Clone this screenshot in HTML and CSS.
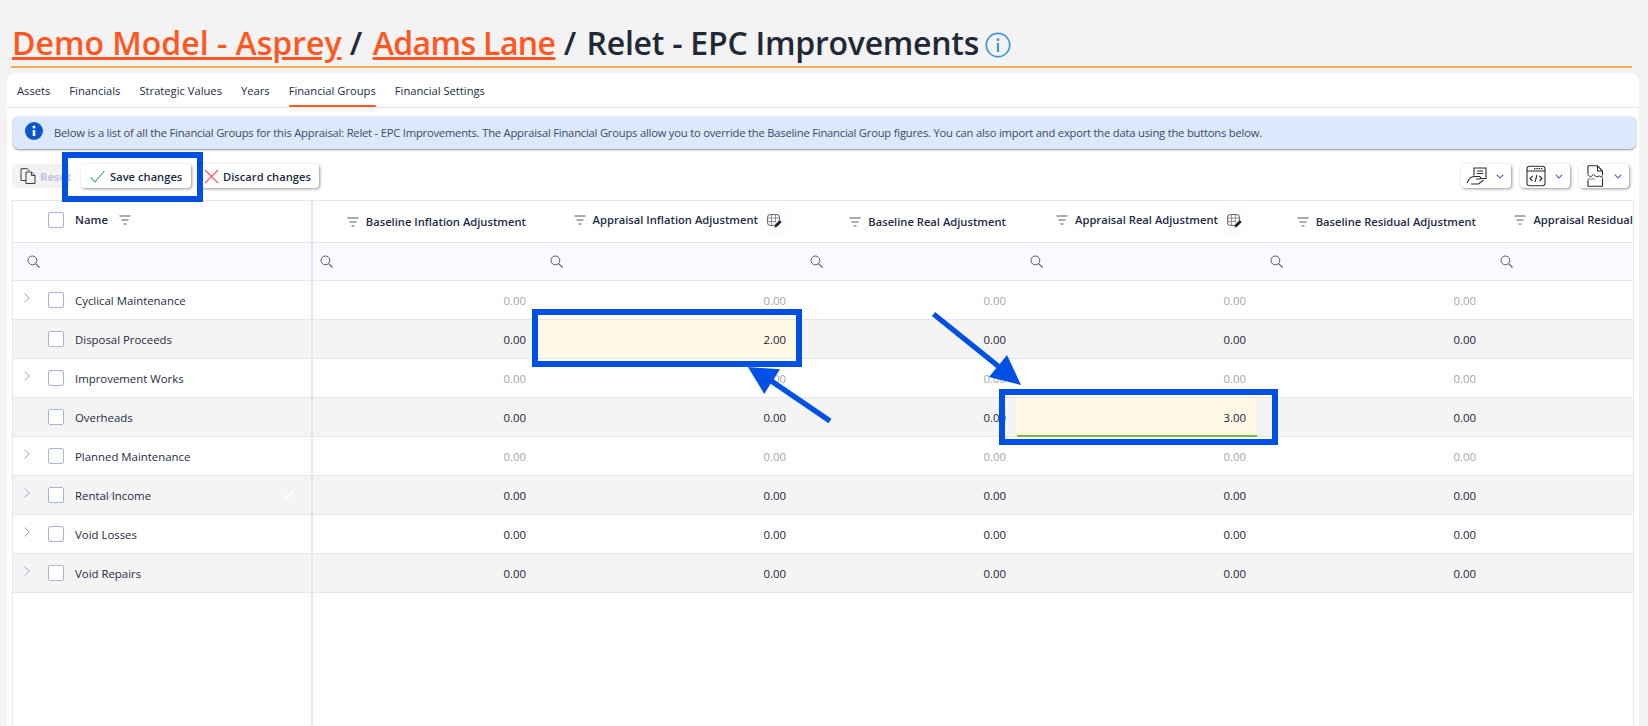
FILE: index.html
```html
<!DOCTYPE html>
<html lang="en">
<head>
<meta charset="utf-8">
<title>Relet - EPC Improvements</title>
<link rel="stylesheet" href="styles.css">
</head>
<body>
<svg class="defs" width="0" height="0" aria-hidden="true">
  <symbol id="i-filter" viewBox="0 0 12 10"><path d="M.5 1h11M2.500 5h7M4.500 9h3" fill="none" stroke="currentColor" stroke-width="1"/></symbol>
  <symbol id="i-search" viewBox="0 0 13 13"><circle cx="5.400" cy="5.400" r="4.400" fill="none" stroke="currentColor" stroke-width="1"/><path d="M8.600 8.600l3.900 3.900" fill="none" stroke="currentColor" stroke-width="1.100"/></symbol>
  <symbol id="i-chev" viewBox="0 0 6 10"><path d="M.6.6L5.200 5 .6 9.400" fill="none" stroke="currentColor" stroke-width="1"/></symbol>
  <symbol id="i-down" viewBox="0 0 8 5"><path d="M.7.7L4 4l3.300-3.300" fill="none" stroke="currentColor" stroke-width="1.100"/></symbol>
  <symbol id="i-edit" viewBox="0 0 15 14"><g fill="none" stroke-width="1"><rect x=".6" y=".6" width="11.800" height="10.800" rx="2.500" stroke="#55586a"/><path d="M.6 4h11.800M.6 7.500h8" stroke="#8b8896"/><path d="M4.500 .6v10.800M8.500 .6v8" stroke="#a08f86"/></g><path d="M7 13.800l.7-3 5-5 2.300 2.300-5 5z" fill="#1d2230" stroke="#fff" stroke-width=".5"/></symbol>
</svg>

<h1 class="title">
  <a class="crumb-model" href="#">Demo Model - Asprey</a> / <a class="crumb-scheme" href="#">Adams Lane</a> / <span class="crumb-current">Relet - EPC Improvements</span>
  <svg class="title-info" viewBox="0 0 26 26"><circle cx="13" cy="13" r="11.700" fill="none" stroke="#3a98d8" stroke-width="1.700"/><circle cx="13" cy="7.700" r="1.400" fill="#3a98d8"/><path d="M13 11v9" stroke="#3a98d8" stroke-width="2.200"/></svg>
</h1>

<main class="card">
  <nav class="tabs">
    <a class="tab" href="#">Assets</a>
    <a class="tab" href="#">Financials</a>
    <a class="tab" href="#">Strategic Values</a>
    <a class="tab" href="#">Years</a>
    <a class="tab is-active" href="#">Financial Groups</a>
    <a class="tab" href="#">Financial Settings</a>
  </nav>

  <div class="banner">
    <svg class="banner-icon" viewBox="0 0 18 18"><circle cx="9" cy="9" r="9" fill="#0b57c9"/><circle cx="9" cy="5" r="1.500" fill="#fff"/><path d="M9 8v6" stroke="#fff" stroke-width="2.600"/></svg>
    <p>Below is a list of all the Financial Groups for this Appraisal: Relet - EPC Improvements. The Appraisal Financial Groups allow you to override the Baseline Financial Group figures. You can also import and export the data using the buttons below.</p>
  </div>

  <div class="toolbar">
    <button class="btn btn-reset">
      <svg class="btn-icon" viewBox="0 0 16 16"><path d="M6 12.500H1V.7h6.500L9.500 3M6 4h5.500l3.500 3.500v8H6z M11.500 4v3.500H15" fill="none" stroke="#3c3c44" stroke-width="1"/></svg>
      <span>Reset</span>
    </button>
    <button class="btn btn-save">
      <svg class="btn-icon" viewBox="0 0 15 15"><path d="M.7 8.300l4.300 4.700L14.300 2" fill="none" stroke="#2fae63" stroke-width="1.100"/></svg>
      <span>Save changes</span>
    </button>
    <button class="btn btn-discard">
      <svg class="btn-icon" viewBox="0 0 15 15"><path d="M1 1l13 13M14 1L1 14" fill="none" stroke="#ec5f67" stroke-width="1.200"/></svg>
      <span>Discard changes</span>
    </button>
    <div class="toolbar-right">
      <button class="btn btn-menu">
        <svg class="menu-icon" viewBox="0 0 22 22"><path d="M8 10.500V3h12v10.500h-6M11 6h6M11 8.500h6" fill="none" stroke="#2b2b33" stroke-width="1.100"/><path d="M1 18c2-4.500 4-6.500 7-6.500h5.500c1.500.3 1.500 2.500 0 2.500H10M5 19h7.500l5-4" fill="none" stroke="#2b2b33" stroke-width="1.100"/></svg>
        <svg class="down" aria-hidden="true"><use href="#i-down"/></svg>
      </button>
      <button class="btn btn-menu">
        <svg class="menu-icon" viewBox="0 0 22 22"><rect x="2" y="1.200" width="18" height="19.600" rx="2.500" fill="none" stroke="#2b2b33" stroke-width="1.100"/><path d="M2 6h18" stroke="#2b2b33" stroke-width="1"/><path d="M9 3.700h8.500" stroke="#2b2b33" stroke-width="1.300" stroke-dasharray="1.500 .8"/><path d="M7.500 11l-2.500 2.500 2.500 2.500M14.500 11l2.500 2.500-2.500 2.500M12 10l-2 7" fill="none" stroke="#2b2b33" stroke-width="1.100"/></svg>
        <svg class="down" aria-hidden="true"><use href="#i-down"/></svg>
      </button>
      <button class="btn btn-menu">
        <svg class="menu-icon" viewBox="0 0 22 22"><path d="M4 9V.8h9.500L18.500 6v4.500M4 14.500v6.700h14.500V13.500M13.500 .8V6h5" fill="none" stroke="#2b2b33" stroke-width="1.100"/><path d="M3.500 9.500l3 2.500 3-2.500 3 2.500 3-1 3.500 1.500" fill="none" stroke="#2b2b33" stroke-width="1"/><path d="M4 13l3 1.500 2-1 2 1.500" fill="none" stroke="#6a6a72" stroke-width=".8"/></svg>
        <svg class="down" aria-hidden="true"><use href="#i-down"/></svg>
      </button>
    </div>
  </div>

  <div class="grid">
    <div class="row row-head">
      <div class="cell cell-name head-name"><span class="check"></span><b>Name</b><svg class="ic-filter name-filter"><use href="#i-filter"/></svg></div>
      <div class="cell head"><svg class="ic-filter"><use href="#i-filter"/></svg><b>Baseline Inflation Adjustment</b></div>
      <div class="cell head head-edit"><svg class="ic-filter"><use href="#i-filter"/></svg><b>Appraisal Inflation Adjustment</b><span class="edit-box"><svg class="ic-edit"><use href="#i-edit"/></svg></span></div>
      <div class="cell head"><svg class="ic-filter"><use href="#i-filter"/></svg><b>Baseline Real Adjustment</b></div>
      <div class="cell head head-edit"><svg class="ic-filter"><use href="#i-filter"/></svg><b>Appraisal Real Adjustment</b><span class="edit-box"><svg class="ic-edit"><use href="#i-edit"/></svg></span></div>
      <div class="cell head"><svg class="ic-filter"><use href="#i-filter"/></svg><b>Baseline Residual Adjustment</b></div>
      <div class="cell head head-edit head-last"><svg class="ic-filter"><use href="#i-filter"/></svg><b>Appraisal Residual Adjustment</b></div>
    </div>

    <div class="row row-search">
      <div class="cell cell-name search s0"><svg class="ic-search"><use href="#i-search"/></svg></div>
      <div class="cell search s1"><svg class="ic-search"><use href="#i-search"/></svg></div>
      <div class="cell search s2"><svg class="ic-search"><use href="#i-search"/></svg></div>
      <div class="cell search s3"><svg class="ic-search"><use href="#i-search"/></svg></div>
      <div class="cell search s3"><svg class="ic-search"><use href="#i-search"/></svg></div>
      <div class="cell search s3"><svg class="ic-search"><use href="#i-search"/></svg></div>
      <div class="cell search s3"><svg class="ic-search"><use href="#i-search"/></svg></div>
    </div>

    <div class="row is-muted">
      <div class="cell cell-name"><svg class="chev"><use href="#i-chev"/></svg><span class="check"></span><span>Cyclical Maintenance</span></div>
      <div class="cell num">0.00</div><div class="cell num">0.00</div><div class="cell num">0.00</div><div class="cell num">0.00</div><div class="cell num">0.00</div><div class="cell num"></div>
    </div>
    <div class="row is-alt">
      <div class="cell cell-name no-chev"><span class="check"></span><span>Disposal Proceeds</span></div>
      <div class="cell num">0.00</div><div class="cell num is-edited">2.00</div><div class="cell num">0.00</div><div class="cell num">0.00</div><div class="cell num">0.00</div><div class="cell num"></div>
    </div>
    <div class="row is-muted">
      <div class="cell cell-name"><svg class="chev"><use href="#i-chev"/></svg><span class="check"></span><span>Improvement Works</span></div>
      <div class="cell num">0.00</div><div class="cell num">0.00</div><div class="cell num">0.00</div><div class="cell num">0.00</div><div class="cell num">0.00</div><div class="cell num"></div>
    </div>
    <div class="row is-alt">
      <div class="cell cell-name no-chev"><span class="check"></span><span>Overheads</span></div>
      <div class="cell num">0.00</div><div class="cell num">0.00</div><div class="cell num">0.00</div><div class="cell num is-edited is-focus">3.00</div><div class="cell num">0.00</div><div class="cell num"></div>
    </div>
    <div class="row is-muted">
      <div class="cell cell-name"><svg class="chev"><use href="#i-chev"/></svg><span class="check"></span><span>Planned Maintenance</span></div>
      <div class="cell num">0.00</div><div class="cell num">0.00</div><div class="cell num">0.00</div><div class="cell num">0.00</div><div class="cell num">0.00</div><div class="cell num"></div>
    </div>
    <div class="row is-alt">
      <div class="cell cell-name"><svg class="chev"><use href="#i-chev"/></svg><span class="check"></span><span>Rental Income</span>
        <svg class="row-tick" viewBox="0 0 11 9"><path d="M.7 5l3 3L10.300 .8" fill="none" stroke="#fff" stroke-width="1.300"/></svg>
        <svg class="cursor-mark" viewBox="0 0 6 8"><path d="M.5 7.500L5.500 .5" stroke="#b9b9c2" stroke-width="1"/></svg>
      </div>
      <div class="cell num">0.00</div><div class="cell num">0.00</div><div class="cell num">0.00</div><div class="cell num">0.00</div><div class="cell num">0.00</div><div class="cell num"></div>
    </div>
    <div class="row">
      <div class="cell cell-name"><svg class="chev"><use href="#i-chev"/></svg><span class="check"></span><span>Void Losses</span></div>
      <div class="cell num">0.00</div><div class="cell num">0.00</div><div class="cell num">0.00</div><div class="cell num">0.00</div><div class="cell num">0.00</div><div class="cell num"></div>
    </div>
    <div class="row is-alt">
      <div class="cell cell-name"><svg class="chev"><use href="#i-chev"/></svg><span class="check"></span><span>Void Repairs</span></div>
      <div class="cell num">0.00</div><div class="cell num">0.00</div><div class="cell num">0.00</div><div class="cell num">0.00</div><div class="cell num">0.00</div><div class="cell num"></div>
    </div>
    <div class="row row-empty"><div class="cell cell-name"></div></div>
  </div>
</main>

<svg class="annotations" viewBox="0 0 1648 726" aria-hidden="true">
  <g fill="none" stroke="#0050e4" stroke-width="6">
    <rect x="65" y="155" width="135" height="44"/>
    <rect x="535" y="312" width="264" height="52"/>
    <rect x="1002" y="392" width="273" height="50"/>
  </g>
  <g fill="#0050e4">
    <path d="M748 367L780 369.300 773.500 379.300 831.500 418.800 828.500 423.200 770.500 383.700 764.300 394z"/>
    <path d="M1021 385L989 377 996.300 368.100 931.800 316.100 935.200 311.900 999.700 363.900 1007 355z"/>
  </g>
</svg>
</body>
</html>
```
FILE: styles.css
```css
* { box-sizing: border-box; }
html, body { margin: 0; height: 726px; overflow: hidden; }
body {
  position: relative;
  background: #f3f3f3;
  font-family: "Open Sans", "Noto Sans", sans-serif;
  font-size: 11.4px;
  color: #1f2a44;
  padding: 0 9px 0 7px;
}
.defs { position: absolute; }
.title {
  margin: 0 7px 0 4px;
  height: 68px;
  padding: 25px 0 0 1px;
  border-bottom: 2px solid #f6ad55;
  font-size: 32px;
  line-height: 36px;
  font-weight: 600;
  color: #1f2937;
  white-space: nowrap;
}
.title a {
  color: #ff5722;
  text-decoration-thickness: 3px;
}
.crumb-scheme { margin-left: 2px; letter-spacing: -.6px; }
.crumb-current { margin-left: 2px; letter-spacing: -.25px; }
.title-info { width: 26px; height: 26px; vertical-align: -3px; margin-left: -2px; }

.card {
  margin-top: 5px;
  height: 660px;
  background: #fff;
  border-radius: 8px 8px 0 0;
  padding: 0 5px;
  overflow: hidden;
}
.tabs {
  display: flex;
  gap: 19px;
  height: 35px;
  margin: 0 -5px;
  padding: 0 0 0 10px;
  border-bottom: 1px solid #e4e7f0;
  font-size: 11.2px;
}
.tab {
  height: 34px;
  padding-top: 9px;
  color: #1f2a44;
  text-decoration: none;
  line-height: 18px;
  position: relative;
}
.tab.is-active::after {
  content: "";
  position: absolute;
  left: 0; right: 0; bottom: 0;
  height: 2px;
  border-radius: 2px;
  background: #ff5722;
}
.banner {
  display: flex;
  align-items: center;
  gap: 11px;
  height: 33px;
  margin: 8px -2px 0 1px;
  padding: 0 0 0 12px;
  background: #dce8fb;
  border-radius: 6px;
  box-shadow: 0 1px 2px rgba(60, 60, 70, .55);
}
.banner-icon { width: 18px; height: 18px; flex: none; margin-bottom: 4px; }
.banner p {
  margin: 0;
  color: #3c4a66;
  white-space: nowrap;
  font-size: 11.2px;
  letter-spacing: -.2px;
}

.toolbar {
  display: flex;
  height: 24px;
  margin: 15px 0 12px;
}
.btn {
  display: flex;
  align-items: center;
  height: 24px;
  border: 0;
  padding: 0;
  background: #fff;
  border-radius: 4px;
  font: 600 11.2px "Open Sans", "Noto Sans", sans-serif;
  color: #1f2a44;
  box-shadow: 1px 1px 3px rgba(50, 50, 60, .5);
  white-space: nowrap;
}
.btn-icon { width: 15px; height: 15px; flex: none; }
.btn-reset {
  width: 58px;
  margin-right: 11px;
  padding-left: 8px;
  gap: 4px;
  background: #f3f3f4;
  color: #bcc6e4;
  box-shadow: none;
  font-weight: 700;
}
.btn-reset .btn-icon { width: 16px; height: 16px; }
.btn-save { width: 110px; margin-right: 8px; padding-left: 9px; gap: 5px; }
.btn-discard { width: 120px; padding-left: 5px; gap: 4px; }
.toolbar-right { display: flex; gap: 9px; margin-left: auto; margin-right: 5px; }
.btn-menu { width: 50px; padding-left: 5px; justify-content: flex-start; }
.menu-icon { width: 22px; height: 22px; }
.down { width: 8px; height: 5px; margin-left: 8px; color: #4a6fb5; }

.grid {
  height: 600px;
  width: 1622px;
  border: 1px solid #e4e7f0;
  border-bottom: 0;
  overflow: hidden;
}
.row {
  display: grid;
  grid-template-columns: 300px 224px 260px 220px 240px 230px 230px;
  height: 39px;
}
.row-head { height: 42px; }
.row-search { height: 38px; background: #f9faff; }
.row-empty { height: 200px; }
.is-alt { background: #f4f4f5; }
.cell {
  display: flex;
  align-items: center;
  min-width: 0;
  border-bottom: 1px solid #e4e7f0;
}
.row-empty .cell { border-bottom: 0; }
.cell-name {
  position: relative;
  padding-left: 11px;
  border-right: 2px solid #e4e7f0;
}
.cell-name .check { margin-right: 11px; }
.no-chev { padding-left: 35px; }
.chev { width: 6px; height: 10px; margin: -4px 18px 0 0; color: #9aa3c4; flex: none; }
.check {
  width: 16px;
  height: 16px;
  flex: none;
  background: #fff;
  border: 1px solid #a9b4d6;
  border-radius: 2px;
}
.head-name { padding: 0 0 4px 35px; }
.head-name b { font-weight: 600; }
.ic-filter { width: 12px; height: 10px; flex: none; color: #55596a; }
.name-filter { margin-left: 11px; }
.head {
  justify-content: flex-end;
  gap: 7px;
  padding-right: 11px;
  white-space: nowrap;
  font-size: 11.2px;
}
.head b { font-weight: 600; }
.head-edit { padding: 0 11px 4px 0; }
.head-last { padding-right: 18px; }
.edit-box {
  display: flex;
  align-items: center;
  justify-content: center;
  width: 24px;
  height: 24px;
  border-radius: 4px;
  background: #fff;
  margin-left: -3px;
  flex: none;
  box-shadow: 0 0 2px rgba(120, 120, 130, .12);
}
.ic-edit { width: 15px; height: 14px; margin-top: 2px; }
.search { padding-left: 13px; }
.s0 { padding-left: 14px; }
.s1 { padding-left: 7px; }
.s2 { padding-left: 13px; }
.ic-search { width: 13px; height: 13px; color: #555a6b; }
.num {
  justify-content: flex-end;
  padding-right: 11px;
  color: #1b2238;
}
.is-muted .num { color: #a9a5a3; }
.is-edited { background: #fef8e4; }
.is-focus { border-bottom: 2px solid #7ab83c; padding-top: 1px; }
.row-tick { position: absolute; left: 270px; top: 14px; width: 11px; height: 9px; }
.cursor-mark { position: absolute; left: 95px; top: 15px; width: 6px; height: 8px; }

.annotations {
  position: absolute;
  left: 0; top: 0;
  width: 1648px;
  height: 726px;
  pointer-events: none;
}
```
